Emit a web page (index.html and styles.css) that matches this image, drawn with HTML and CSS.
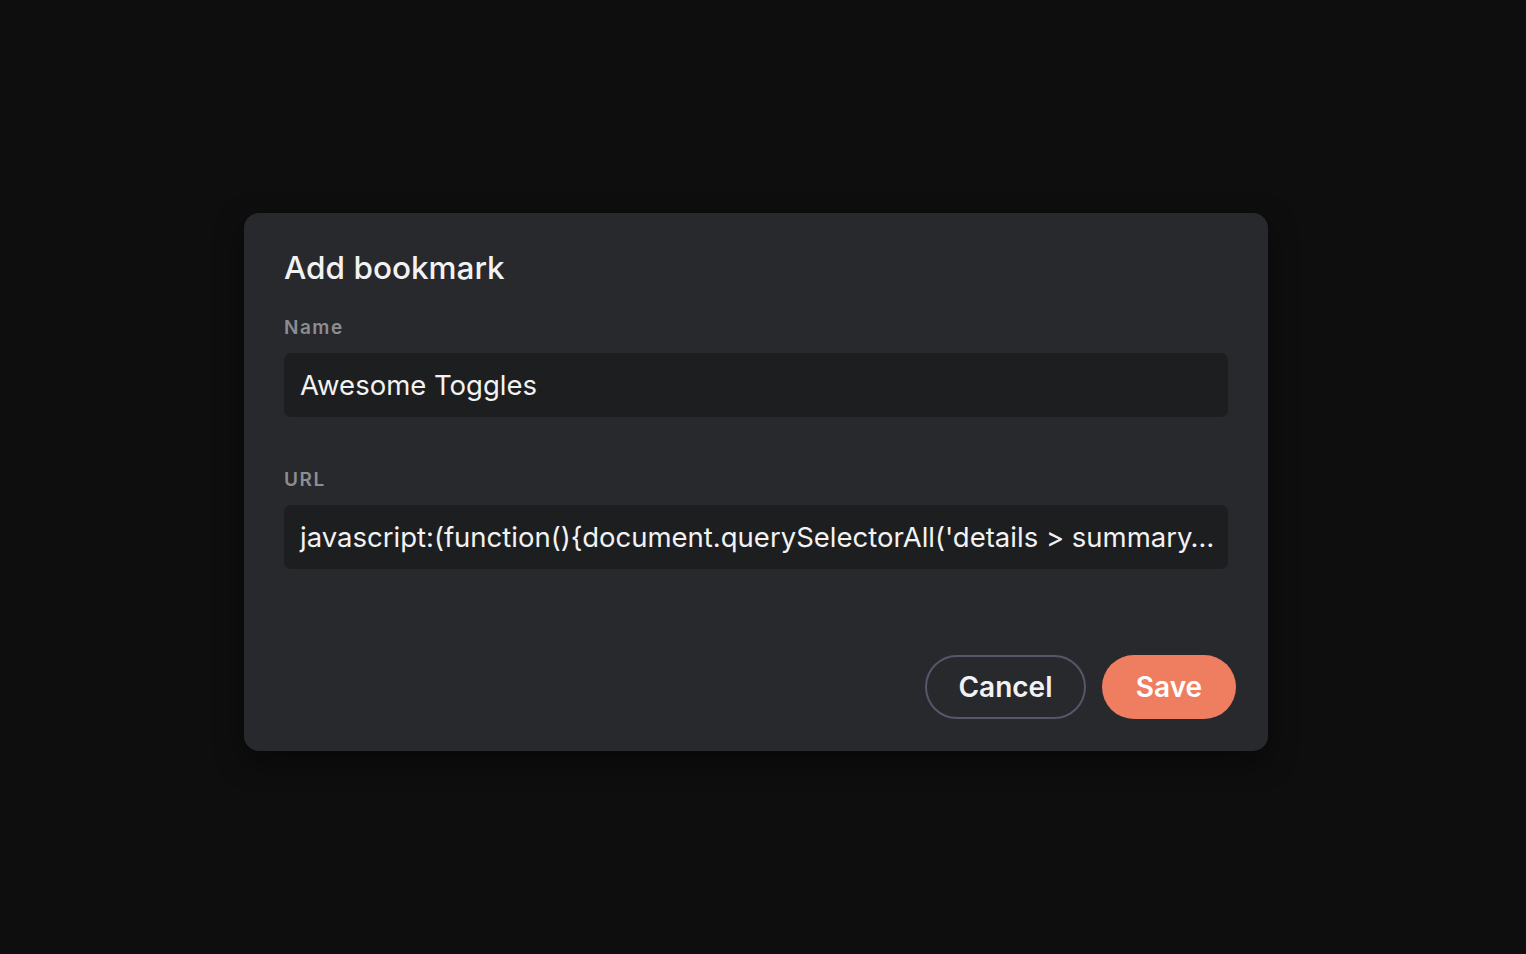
FILE: index.html
```html
<!DOCTYPE html>
<html lang="en">
<head>
<meta charset="utf-8">
<title>Add bookmark</title>
<link rel="stylesheet" href="styles.css">
</head>
<body>
<div class="backdrop">
  <form class="dialog">
    <h2 class="dialog-title">Add bookmark</h2>
    <div class="field">
      <label class="field-label" for="name">Name</label>
      <div class="field-input" id="name">Awesome Toggles</div>
    </div>
    <div class="field">
      <label class="field-label" for="url">URL</label>
      <div class="field-input" id="url">javascript:(function(){document.querySelectorAll('details &gt; summary…</div>
    </div>
    <div class="actions">
      <button type="button" class="btn btn-outline">Cancel</button>
      <button type="button" class="btn btn-primary">Save</button>
    </div>
  </form>
</div>
</body>
</html>
```

FILE: styles.css
```css
* { box-sizing: border-box; }
html, body { margin: 0; height: 100%; }
body {
  background: #0e0e0f;
  font-family: Inter, "Noto Sans", sans-serif;
  color: #f2f2f3;
}
.backdrop {
  height: 100%;
  display: flex;
  align-items: flex-start;
  justify-content: flex-start;
  padding: 213px 0 0 244px;
}
.dialog {
  width: 1024px;
  height: 538px;
  background: #28292d;
  border-radius: 15px;
  padding: 36px 32px 32px 40px;
  display: flex;
  flex-direction: column;
  box-shadow: 0 10px 30px rgba(0,0,0,0.45);
}
.dialog-title {
  margin: 0 0 29px;
  font-size: 31.5px;
  line-height: 38px;
  font-weight: 500;
  letter-spacing: 0;
}
.field {
  display: flex;
  flex-direction: column;
  width: 944px;
  margin-bottom: 51px;
}
.field-label {
  font-size: 19px;
  line-height: 24px;
  font-weight: 600;
  color: #8c8d92;
  letter-spacing: 1.5px;
  margin-bottom: 13px;
}
.field-input {
  height: 64px;
  background: #1d1e20;
  border-radius: 7px;
  padding: 0 8px 0 16px;
  font-size: 27.5px;
  line-height: 64px;
  white-space: nowrap;
  overflow: hidden;
}
.actions {
  margin-top: auto;
  display: flex;
  justify-content: flex-end;
  gap: 16px;
}
.btn {
  height: 64px;
  border-radius: 32px;
  font-family: inherit;
  font-size: 28px;
  font-weight: 600;
  padding: 0;
  cursor: pointer;
}
.btn-outline {
  width: 161px;
  background: transparent;
  border: 2px solid #57566a;
  color: #f2f2f3;
}
.btn-primary {
  width: 134px;
  background: #ef7e60;
  border: 0;
  color: #fff;
}
```
